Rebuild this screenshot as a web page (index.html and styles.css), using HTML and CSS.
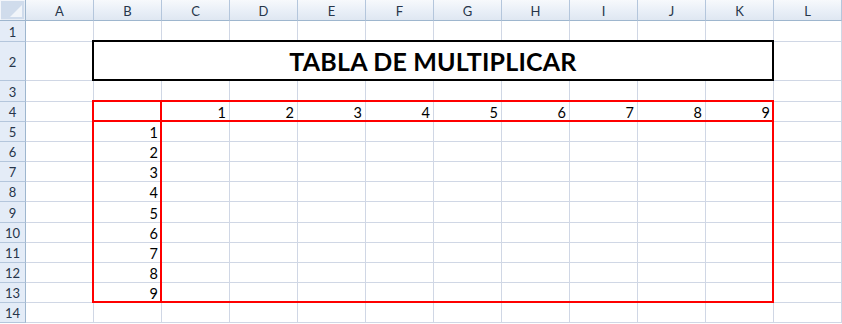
FILE: index.html
```html
<!DOCTYPE html>
<html lang="es">
<head>
  <meta charset="UTF-8">
  <title>Tabla de multiplicar</title>
  <link rel="stylesheet" href="styles.css">
</head>
<body>
  <div class="sheet">
    <div class="layout cells">
      <div class="corner">
        <svg width="12" height="12" viewBox="0 0 12 12"><polygon points="12,0 12,12 0,12" fill="#f1f5fa"/></svg>
      </div>
      <div class="colhead">A</div><div class="colhead">B</div><div class="colhead">C</div><div class="colhead">D</div>
      <div class="colhead">E</div><div class="colhead">F</div><div class="colhead">G</div><div class="colhead">H</div>
      <div class="colhead">I</div><div class="colhead">J</div><div class="colhead">K</div><div class="colhead">L</div>

      <div class="rowhead">1</div>
      <div class="c"></div><div class="c"></div><div class="c"></div><div class="c"></div><div class="c"></div><div class="c"></div>
      <div class="c"></div><div class="c"></div><div class="c"></div><div class="c"></div><div class="c"></div><div class="c"></div>

      <div class="rowhead">2</div>
      <div class="c"></div><div class="c"></div><div class="c"></div><div class="c"></div><div class="c"></div><div class="c"></div>
      <div class="c"></div><div class="c"></div><div class="c"></div><div class="c"></div><div class="c"></div><div class="c"></div>

      <div class="rowhead">3</div>
      <div class="c"></div><div class="c"></div><div class="c"></div><div class="c"></div><div class="c"></div><div class="c"></div>
      <div class="c"></div><div class="c"></div><div class="c"></div><div class="c"></div><div class="c"></div><div class="c"></div>

      <div class="rowhead">4</div>
      <div class="c"></div><div class="c"></div><div class="c">1</div><div class="c">2</div><div class="c">3</div><div class="c">4</div>
      <div class="c">5</div><div class="c">6</div><div class="c">7</div><div class="c">8</div><div class="c">9</div><div class="c"></div>

      <div class="rowhead">5</div>
      <div class="c"></div><div class="c">1</div><div class="c"></div><div class="c"></div><div class="c"></div><div class="c"></div>
      <div class="c"></div><div class="c"></div><div class="c"></div><div class="c"></div><div class="c"></div><div class="c"></div>

      <div class="rowhead">6</div>
      <div class="c"></div><div class="c">2</div><div class="c"></div><div class="c"></div><div class="c"></div><div class="c"></div>
      <div class="c"></div><div class="c"></div><div class="c"></div><div class="c"></div><div class="c"></div><div class="c"></div>

      <div class="rowhead">7</div>
      <div class="c"></div><div class="c">3</div><div class="c"></div><div class="c"></div><div class="c"></div><div class="c"></div>
      <div class="c"></div><div class="c"></div><div class="c"></div><div class="c"></div><div class="c"></div><div class="c"></div>

      <div class="rowhead">8</div>
      <div class="c"></div><div class="c">4</div><div class="c"></div><div class="c"></div><div class="c"></div><div class="c"></div>
      <div class="c"></div><div class="c"></div><div class="c"></div><div class="c"></div><div class="c"></div><div class="c"></div>

      <div class="rowhead">9</div>
      <div class="c"></div><div class="c">5</div><div class="c"></div><div class="c"></div><div class="c"></div><div class="c"></div>
      <div class="c"></div><div class="c"></div><div class="c"></div><div class="c"></div><div class="c"></div><div class="c"></div>

      <div class="rowhead">10</div>
      <div class="c"></div><div class="c">6</div><div class="c"></div><div class="c"></div><div class="c"></div><div class="c"></div>
      <div class="c"></div><div class="c"></div><div class="c"></div><div class="c"></div><div class="c"></div><div class="c"></div>

      <div class="rowhead">11</div>
      <div class="c"></div><div class="c">7</div><div class="c"></div><div class="c"></div><div class="c"></div><div class="c"></div>
      <div class="c"></div><div class="c"></div><div class="c"></div><div class="c"></div><div class="c"></div><div class="c"></div>

      <div class="rowhead">12</div>
      <div class="c"></div><div class="c">8</div><div class="c"></div><div class="c"></div><div class="c"></div><div class="c"></div>
      <div class="c"></div><div class="c"></div><div class="c"></div><div class="c"></div><div class="c"></div><div class="c"></div>

      <div class="rowhead">13</div>
      <div class="c"></div><div class="c">9</div><div class="c"></div><div class="c"></div><div class="c"></div><div class="c"></div>
      <div class="c"></div><div class="c"></div><div class="c"></div><div class="c"></div><div class="c"></div><div class="c"></div>

      <div class="rowhead">14</div>
      <div class="c"></div><div class="c"></div><div class="c"></div><div class="c"></div><div class="c"></div><div class="c"></div>
      <div class="c"></div><div class="c"></div><div class="c"></div><div class="c"></div><div class="c"></div><div class="c"></div>
    </div>

    <!-- merged cell and thick borders, drawn on the same grid -->
    <div class="layout marks">
      <div class="title">TABLA DE MULTIPLICAR</div>
      <div class="frame"></div>
      <div class="frame-head"></div>
      <div class="frame-side"></div>
    </div>
  </div>
</body>
</html>
```

FILE: styles.css
```css
body {
  margin: 0;
  background-color: white;
  font-family: Lato, "Open Sans", sans-serif;
}
.sheet {
  display: grid;
}
.sheet > .layout {
  grid-area: 1 / 1;
}
.layout {
  display: grid;
  grid-template-columns: 26px repeat(12, 68px);
  grid-template-rows: 21px 21px 39px 21px 20px 20px 20px 20px 20px 21px 20px 20px 20px 20px 20px;
}
.c {
  box-sizing: border-box;
  border-right: 1px solid #d0d7e5;
  border-bottom: 1px solid #d0d7e5;
  display: flex;
  align-items: flex-end;
  justify-content: flex-end;
  padding: 0 3px 0 0;
  font-size: 14.5px;
  line-height: 17px;
  color: black;
}
.corner {
  box-sizing: border-box;
  background-color: #d0dcec;
  border-right: 1px solid #9eb6ce;
  border-bottom: 1px solid #9eb6ce;
  box-shadow: inset 1px 1px 0 #f3f6fb, inset -1px -1px 0 #e8eef6;
  display: flex;
  align-items: flex-end;
  justify-content: flex-end;
  padding: 0 3px 3px 0;
}
.corner svg {
  display: block;
}
.colhead {
  box-sizing: border-box;
  background: linear-gradient(to bottom, #f7f9fc, #e9eff7 55%, #dfe7f2);
  border-right: 1px solid #b4c6dc;
  border-bottom: 1px solid #9eb6ce;
  display: flex;
  align-items: center;
  justify-content: center;
  padding-top: 2px;
  font-size: 13px;
  color: #27354a;
}
.rowhead {
  box-sizing: border-box;
  background-color: #e4ecf7;
  border-right: 1px solid #9eb6ce;
  border-bottom: 1px solid #b4c6dc;
  display: flex;
  align-items: center;
  justify-content: center;
  padding-top: 1px;
  font-size: 13px;
  color: #27354a;
}
.title {
  grid-column: 3 / 13;
  grid-row: 3 / 4;
  margin: -2px 0 0 -2px;
  border: 2px solid black;
  background-color: white;
  display: flex;
  align-items: flex-end;
  justify-content: center;
  padding-bottom: 3px;
  font-size: 25px;
  font-weight: 700;
  letter-spacing: 0.2px;
  color: black;
}
.frame {
  grid-column: 3 / 13;
  grid-row: 5 / 15;
  margin: -2px 0 0 -2px;
  border: 2px solid #ff0000;
}
.frame-head {
  grid-column: 3 / 13;
  grid-row: 5 / 6;
  border-bottom: 2px solid #ff0000;
}
.frame-side {
  grid-column: 3 / 4;
  grid-row: 5 / 15;
  border-right: 2px solid #ff0000;
}
```
